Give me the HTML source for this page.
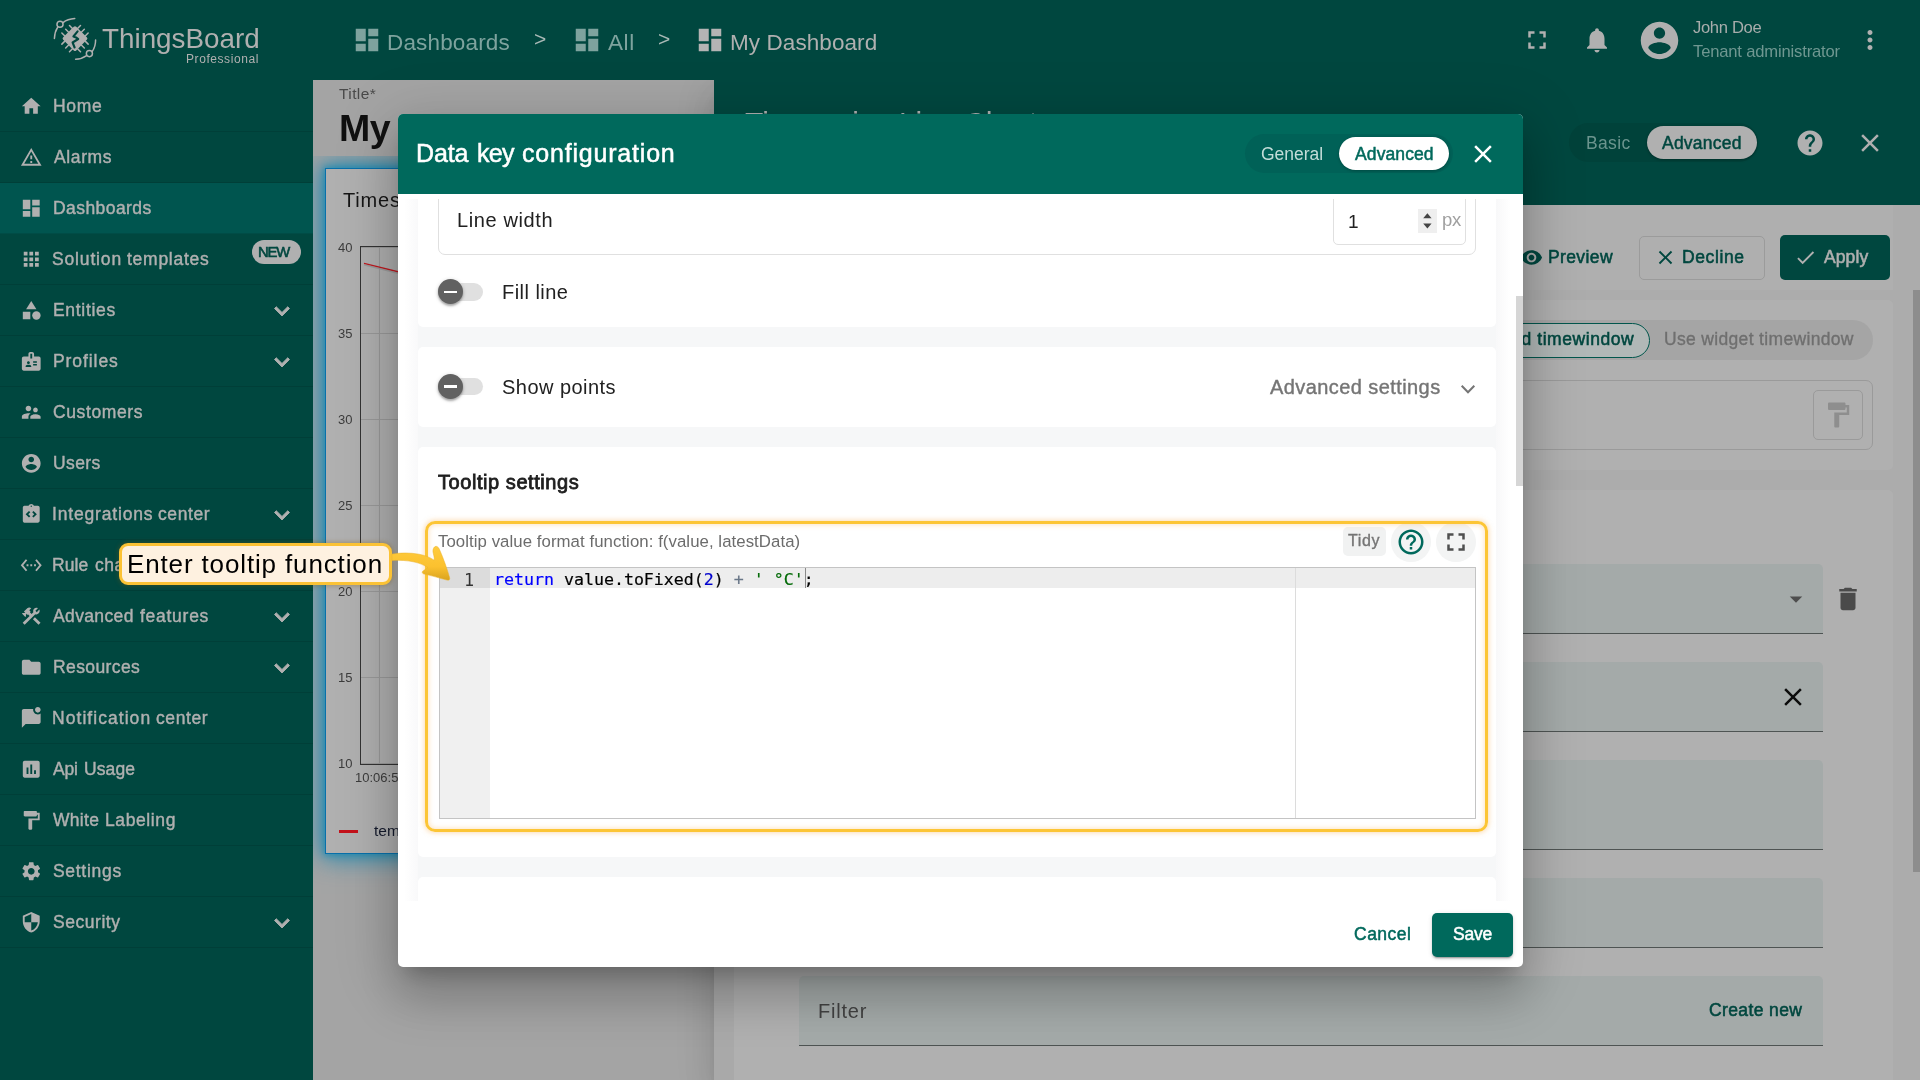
<!DOCTYPE html>
<html lang="en">
<head>
<meta charset="utf-8">
<title>ThingsBoard - Data key configuration</title>
<style>
*{box-sizing:border-box;margin:0;padding:0}
html,body{width:1920px;height:1080px;overflow:hidden}
body{will-change:opacity;font-family:"Liberation Sans",sans-serif;position:relative;background:#a4a4a4;color:#212121}
.abs{position:absolute}
svg.ic{position:absolute;display:block;fill:currentColor}
.t{position:absolute;white-space:nowrap;line-height:1;will-change:transform}
.m{-webkit-text-stroke:0.35px currentColor}

/* ---------- top toolbar ---------- */
#topbar{position:absolute;left:313px;top:0;width:1607px;height:80px;background:#00473f}
/* ---------- sidebar ---------- */
#side{position:absolute;left:0;top:0;width:313px;height:1080px;background:#00473f;z-index:3}
#side .row{position:absolute;left:0;width:313px;height:51px;border-bottom:1px solid rgba(0,0,0,.10)}
#side .row.act{background:#00554f}
#side .row .lbl{will-change:transform;position:absolute;left:52.5px;top:0;height:50px;line-height:50px;font-size:17.5px;color:#b0b0b0;white-space:nowrap;letter-spacing:.35px;-webkit-text-stroke:.42px #b0b0b0}
#side .row svg.mi{position:absolute;left:20px;top:14px;width:22.5px;height:22.5px;fill:#b0b0b0}
#side .row svg.ch{position:absolute;left:267px;top:10.5px;width:30px;height:30px;fill:#b0b0b0;stroke:#b0b0b0;stroke-width:.7px}

/* ---------- dashboard area ---------- */
#main{position:absolute;left:313px;top:80px;width:1607px;height:1000px;overflow:hidden}
#dash{position:absolute;left:0;top:0;width:401px;height:1000px;background:#a4a4a4;overflow:hidden}
/* ---------- right panel ---------- */
#panel{position:absolute;left:401px;top:0;width:1206px;height:1000px;background:#acacac;overflow:hidden;box-shadow:0 10px 12px -6px rgba(0,0,0,.12),0 20px 30px 2.5px rgba(0,0,0,.08),0 7.5px 37px 6px rgba(0,0,0,.07)}
#panel .hdr{position:absolute;left:0;top:0;width:1206px;height:125px;background:#00473f}
.card{position:absolute;background:#b0b0b0;border-radius:5px}
.fld{position:absolute;left:85px;width:1024px;background:#a4aaa9;border-bottom:1px solid #4e5453;border-radius:5px 5px 0 0}

/* ---------- dialog ---------- */
#dlg{position:absolute;left:398px;top:114px;width:1125px;height:853px;background:#fff;border-radius:5px;z-index:10;
 box-shadow:0 14px 19px -9px rgba(0,0,0,.22),0 30px 48px 4px rgba(0,0,0,.17),0 11px 58px 10px rgba(0,0,0,.13)}
#dlg .hdr{position:absolute;left:0;top:0;width:1125px;height:80px;background:#00695c;border-radius:5px 5px 0 0}
#scroll{position:absolute;left:0;top:85px;width:1125px;height:702px;overflow:hidden}
.wc{position:absolute;left:20px;width:1078px;background:#fff;border-radius:5px}
</style>
</head>
<body>

<svg width="0" height="0" style="position:absolute">
<defs>
<symbol id="i-home" viewBox="0 0 24 24"><path d="M10 20v-6h4v6h5v-8h3L12 3 2 12h3v8z"/></symbol>
<symbol id="i-warn" viewBox="0 0 24 24"><path d="M12 5.990L19.530 19H4.470L12 5.990M12 2L1 21h22L12 2zm1 14h-2v2h2v-2zm0-6h-2v4h2v-4z"/></symbol>
<symbol id="i-dash" viewBox="0 0 24 24"><path d="M3 13h8V3H3v10zm0 8h8v-6H3v6zm10 0h8V11h-8v10zm0-18v6h8V3h-8z"/></symbol>
<symbol id="i-apps" viewBox="0 0 24 24"><path d="M4 8h4V4H4v4zm6 12h4v-4h-4v4zm-6 0h4v-4H4v4zm0-6h4v-4H4v4zm6 0h4v-4h-4v4zm6-10v4h4V4h-4zm-6 4h4V4h-4v4zm6 6h4v-4h-4v4zm0 6h4v-4h-4v4z"/></symbol>
<symbol id="i-cat" viewBox="0 0 24 24"><path d="M12 2l-5.500 9h11z"/><circle cx="17.500" cy="17.500" r="4.500"/><path d="M3 13.500h8v8H3z"/></symbol>
<symbol id="i-badge" viewBox="0 0 24 24"><path d="M20 7h-5V4c0-1.100-.900-2-2-2h-2c-1.100 0-2 .900-2 2v3H4c-1.100 0-2 .900-2 2v11c0 1.100.900 2 2 2h16c1.100 0 2-.900 2-2V9c0-1.100-.900-2-2-2zM9 12c.830 0 1.500.670 1.500 1.500S9.830 15 9 15s-1.500-.670-1.500-1.500S8.170 12 9 12zm3 6H6v-.750c0-1 2-1.500 3-1.500s3 .500 3 1.500V18zm1-9h-2V4h2v5zm5 7.500h-4V15h4v1.500zm0-3h-4V12h4v1.500z"/></symbol>
<symbol id="i-sup" viewBox="0 0 24 24"><path d="M16.500 12c1.380 0 2.490-1.120 2.490-2.500S17.880 7 16.500 7C15.120 7 14 8.120 14 9.500s1.120 2.500 2.500 2.500zM9 11c1.660 0 2.990-1.340 2.990-3S10.660 5 9 5C7.340 5 6 6.340 6 8s1.340 3 3 3zm7.500 3c-1.830 0-5.500.920-5.500 2.750V19h11v-2.250c0-1.830-3.670-2.750-5.500-2.750zM9 13c-2.330 0-7 1.170-7 3.500V19h7v-2.250c0-.850.330-2.340 2.370-3.470C10.500 13.100 9.660 13 9 13z"/></symbol>
<symbol id="i-acc" viewBox="0 0 24 24"><path d="M12 2C6.480 2 2 6.480 2 12s4.480 10 10 10 10-4.480 10-10S17.520 2 12 2zm0 3c1.660 0 3 1.340 3 3s-1.340 3-3 3-3-1.340-3-3 1.340-3 3-3zm0 14.200c-2.500 0-4.710-1.280-6-3.220.030-1.990 4-3.080 6-3.080 1.990 0 5.970 1.090 6 3.080-1.290 1.940-3.500 3.220-6 3.220z"/></symbol>
<symbol id="i-integ" viewBox="0 0 24 24"><path d="M19 3h-4.180C14.400 1.840 13.300 1 12 1s-2.400.840-2.820 2H5c-.140 0-.270.010-.400.040-.390.080-.740.280-1.010.550-.180.180-.330.400-.430.640-.100.230-.160.490-.160.770v14c0 .270.060.540.160.780s.250.450.430.640c.270.270.620.470 1.010.550.130.020.260.030.400.030h14c1.100 0 2-.900 2-2V5c0-1.100-.900-2-2-2zm-8 11.170l-1.410 1.420L6 12l3.590-3.590L11 9.830 8.830 12 11 14.170zm1-9.920c-.410 0-.750-.340-.750-.750s.340-.750.750-.750.750.340.750.750-.340.750-.750.750zm2.410 11.340L13 14.170 15.170 12 13 9.830l1.410-1.420L18 12l-3.590 3.590z"/></symbol>
<symbol id="i-eth" viewBox="0 0 24 24"><path d="M7.770 6.760L6.230 5.480.820 12l5.410 6.520 1.540-1.280L3.420 12l4.350-5.240zM7 13h2v-2H7v2zm10-2h-2v2h2v-2zm-6 2h2v-2h-2v2zm6.770-7.520l-1.540 1.280L20.580 12l-4.350 5.240 1.540 1.280L23.180 12l-5.410-6.520z"/></symbol>
<symbol id="i-cons" viewBox="0 0 24 24"><path d="M13.783 15.172l2.121-2.121 5.996 5.996-2.121 2.121zM17.500 10c1.930 0 3.500-1.570 3.500-3.500 0-.580-.160-1.120-.410-1.600l-2.700 2.700-1.490-1.490 2.700-2.700c-.480-.250-1.020-.410-1.600-.410C15.570 3 14 4.570 14 6.500c0 .410.080.800.210 1.160l-1.850 1.850-1.780-1.780.710-.710-1.410-1.410L12 3.490c-1.170-1.170-3.070-1.170-4.240 0L4.220 7.030l1.410 1.410H2.810l-.710.710 3.540 3.540.710-.710V9.150l1.410 1.410.710-.710 1.780 1.780-7.410 7.410 2.120 2.120L16.340 9.790c.360.130.750.210 1.160.210z"/></symbol>
<symbol id="i-folder" viewBox="0 0 24 24"><path d="M10 4H4c-1.100 0-1.990.900-1.990 2L2 18c0 1.100.900 2 2 2h16c1.100 0 2-.900 2-2V8c0-1.100-.900-2-2-2h-8l-2-2z"/></symbol>
<symbol id="i-chat" viewBox="0 0 24 24"><path d="M22 6.980V16c0 1.100-.900 2-2 2H6l-4 4V4c0-1.100.900-2 2-2h10.100c-.060.320-.100.660-.100 1 0 2.760 2.240 5 5 5 1.130 0 2.160-.390 3-1.020zM16 3c0 1.660 1.340 3 3 3s3-1.340 3-3-1.340-3-3-3-3 1.340-3 3z"/></symbol>
<symbol id="i-chart" viewBox="0 0 24 24"><path d="M19 3H5c-1.100 0-2 .900-2 2v14c0 1.100.900 2 2 2h14c1.100 0 2-.900 2-2V5c0-1.100-.900-2-2-2zM9 17H7v-7h2v7zm4 0h-2V7h2v10zm4 0h-2v-4h2v4z"/></symbol>
<symbol id="i-paint" viewBox="0 0 24 24"><path d="M18 4V3c0-.550-.450-1-1-1H5c-.550 0-1 .450-1 1v4c0 .550.450 1 1 1h12c.550 0 1-.450 1-1V6h1v4H9v11c0 .550.450 1 1 1h2c.550 0 1-.450 1-1v-9h8V4h-3z"/></symbol>
<symbol id="i-set" viewBox="0 0 24 24"><path d="M19.140 12.940c.040-.300.060-.610.060-.940 0-.320-.020-.640-.070-.940l2.030-1.580c.180-.140.230-.410.120-.610l-1.920-3.320c-.120-.220-.370-.290-.590-.220l-2.390.960c-.500-.380-1.030-.700-1.620-.940l-.360-2.540c-.040-.240-.240-.410-.480-.410h-3.840c-.240 0-.430.170-.470.410l-.360 2.540c-.590.240-1.130.570-1.620.940l-2.390-.960c-.220-.080-.470 0-.590.220L2.740 8.870c-.120.210-.080.470.120.610l2.030 1.580c-.050.300-.090.630-.090.940s.020.640.070.940l-2.030 1.580c-.180.140-.230.410-.120.610l1.920 3.320c.120.220.370.290.590.220l2.390-.960c.500.380 1.030.700 1.620.940l.360 2.540c.050.240.240.410.480.410h3.840c.240 0 .440-.170.470-.410l.360-2.540c.590-.240 1.130-.560 1.620-.940l2.390.960c.220.080.470 0 .590-.220l1.920-3.320c.120-.220.070-.470-.120-.610l-2.010-1.580zM12 15.600c-1.980 0-3.600-1.620-3.600-3.600s1.620-3.600 3.600-3.600 3.600 1.620 3.600 3.600-1.620 3.600-3.600 3.600z"/></symbol>
<symbol id="i-sec" viewBox="0 0 24 24"><path d="M12 1L3 5v6c0 5.550 3.840 10.740 9 12 5.160-1.260 9-6.450 9-12V5l-9-4zm0 10.990h7c-.530 4.120-3.280 7.790-7 8.940V12H5V6.300l7-3.110v8.800z"/></symbol>
<symbol id="i-more" viewBox="0 0 24 24"><path d="M16.590 8.590L12 13.170 7.410 8.590 6 10l6 6 6-6z"/></symbol>
<symbol id="i-full" viewBox="0 0 24 24"><path d="M7 14H5v5h5v-2H7v-3zm-2-4h2V7h3V5H5v5zm12 7h-3v2h5v-5h-2v3zM14 5v2h3v3h2V5h-5z"/></symbol>
<symbol id="i-bell" viewBox="0 0 24 24"><path d="M12 22c1.100 0 2-.900 2-2h-4c0 1.100.890 2 2 2zm6-6v-5c0-3.070-1.640-5.640-4.500-6.320V4c0-.830-.670-1.500-1.500-1.500s-1.500.670-1.500 1.500v.680C7.630 5.360 6 7.920 6 11v5l-2 2v1h16v-1l-2-2z"/></symbol>
<symbol id="i-vert" viewBox="0 0 24 24"><path d="M12 8c1.100 0 2-.900 2-2s-.900-2-2-2-2 .900-2 2 .900 2 2 2zm0 2c-1.100 0-2 .900-2 2s.900 2 2 2 2-.900 2-2-.900-2-2-2zm0 6c-1.100 0-2 .900-2 2s.900 2 2 2 2-.900 2-2-.900-2-2-2z"/></symbol>
<symbol id="i-close" viewBox="0 0 24 24"><path d="M19 6.410L17.590 5 12 10.590 6.410 5 5 6.410 10.590 12 5 17.590 6.410 19 12 13.410 17.590 19 19 17.590 13.410 12z"/></symbol>
<symbol id="i-help" viewBox="0 0 24 24"><path d="M12 2C6.480 2 2 6.480 2 12s4.480 10 10 10 10-4.480 10-10S17.520 2 12 2zm1 17h-2v-2h2v2zm2.070-7.750l-.900.920C13.450 12.900 13 13.500 13 15h-2v-.500c0-1.100.450-2.100 1.170-2.830l1.240-1.260c.370-.360.590-.860.590-1.410 0-1.100-.900-2-2-2s-2 .900-2 2H8c0-2.210 1.790-4 4-4s4 1.790 4 4c0 .880-.360 1.680-.930 2.250z"/></symbol>
<symbol id="i-helpo" viewBox="0 0 24 24"><path d="M11 18h2v-2h-2v2zm1-16C6.480 2 2 6.480 2 12s4.480 10 10 10 10-4.480 10-10S17.520 2 12 2zm0 18c-4.410 0-8-3.590-8-8s3.590-8 8-8 8 3.590 8 8-3.590 8-8 8zm0-14c-2.210 0-4 1.790-4 4h2c0-1.100.900-2 2-2s2 .900 2 2c0 2-3 1.750-3 5h2c0-2.250 3-2.500 3-5 0-2.210-1.790-4-4-4z"/></symbol>
<symbol id="i-eye" viewBox="0 0 24 24"><path d="M12 4.500C7 4.500 2.730 7.610 1 12c1.730 4.390 6 7.500 11 7.500s9.270-3.110 11-7.500c-1.730-4.390-6-7.500-11-7.500zM12 17c-2.760 0-5-2.240-5-5s2.240-5 5-5 5 2.240 5 5-2.240 5-5 5zm0-8c-1.660 0-3 1.340-3 3s1.340 3 3 3 3-1.340 3-3-1.340-3-3-3z"/></symbol>
<symbol id="i-check" viewBox="0 0 24 24"><path d="M9 16.170L4.830 12l-1.420 1.410L9 19 21 7l-1.410-1.410z"/></symbol>
<symbol id="i-del" viewBox="0 0 24 24"><path d="M6 19c0 1.100.900 2 2 2h8c1.100 0 2-.900 2-2V7H6v12zM19 4h-3.500l-1-1h-5l-1 1H5v2h14V4z"/></symbol>
<symbol id="i-drop" viewBox="0 0 24 24"><path d="M7 10l5 5 5-5z"/></symbol>
</defs>
</svg>

<div id="topbar">
  <!-- breadcrumb (coords relative to topbar: x-313) -->
  <svg class="ic" style="left:39px;top:25px;width:30px;height:30px;color:#7ea39e"><use href="#i-dash"/></svg>
  <span class="t" id="bc1" style="left:73.9px;top:31.5px;font-size:22.5px;color:#7ea39e;letter-spacing:0.16px">Dashboards</span>
  <span class="t" id="gt1" style="left:221.4px;top:27.5px;font-size:21px;color:#a9b9b6">&gt;</span>
  <svg class="ic" style="left:258.5px;top:25px;width:30px;height:30px;color:#7ea39e"><use href="#i-dash"/></svg>
  <span class="t" id="bc2" style="left:295px;top:31.5px;font-size:22.5px;color:#7ea39e;letter-spacing:0.60px">All</span>
  <span class="t" id="gt2" style="left:345.3px;top:27.5px;font-size:21px;color:#a9b9b6">&gt;</span>
  <svg class="ic" style="left:382.3px;top:25px;width:30px;height:30px;color:#b4b4b4"><use href="#i-dash"/></svg>
  <span class="t" id="bc3" style="left:417px;top:31.5px;font-size:22.5px;color:#b0b0b0;letter-spacing:.08px">My Dashboard</span>
  <!-- right icons -->
  <svg class="ic" style="left:1209.4px;top:25px;width:30px;height:30px;color:#b0b0b0"><use href="#i-full"/></svg>
  <svg class="ic" style="left:1269px;top:25px;width:30px;height:30px;color:#b0b0b0"><use href="#i-bell"/></svg>
  <svg class="ic" style="left:1324.2px;top:17.9px;width:45px;height:45px;color:#b0b0b0"><use href="#i-acc"/></svg>
  <span class="t" id="un" style="left:1379.5px;top:19.5px;font-size:16.6px;color:#a8adac;letter-spacing:-0.34px">John Doe</span>
  <span class="t" id="ua" style="left:1379.5px;top:43.5px;font-size:16.6px;color:#6f9791;letter-spacing:-0.17px">Tenant administrator</span>
  <svg class="ic" style="left:1541.7px;top:25px;width:30px;height:30px;color:#b0b0b0"><use href="#i-vert"/></svg>
</div>

<div id="side">
  <!-- logo -->
  <svg class="abs" style="left:52px;top:16px;width:46px;height:46px" viewBox="0 0 46 46" fill="none" stroke="#b0b0b0" stroke-width="1.5" stroke-linecap="round">
    <circle cx="8" cy="8.25" r="3.05"/>
    <path d="M5.6 11.3 C3.6 14.4 2.5 18.4 2.4 22.6"/>
    <path d="M11 6.600 C14 4.3 18.3 2.9 22.75 2.6"/>
    <circle cx="37.4" cy="37.6" r="3.05"/>
    <path d="M40.3 35.3 C42.3 32.3 43.600 28 43.600 23.9"/>
    <path d="M34.600 39.6 C31.5 41.8 27.5 43.1 23.600 43.25"/>
    <g transform="translate(23 22.6) rotate(45)">
      <rect x="-9.25" y="-9.25" width="18.500" height="18.500" rx="1.8" fill="#b0b0b0" stroke="none"/>
      <g stroke-width="1.5" stroke-linecap="round">
      <path d="M-5.400 -9v-4.200M0 -9v-4.200M5.400 -9v-4.200M-5.400 9v4.200M0 9v4.200M5.400 9v4.200M-9 -5.400h-4.200M-9 0h-4.200M-9 5.400h-4.200M9 -5.400h4.200M9 0h4.200M9 5.400h4.200"/>
      </g>
    </g>
    <path d="M25.600 15.3 L21.400 20.5 C23.500 21 25 21.800 26.200 23 L20.600 26.500 L22.600 31.500" stroke="#00473f" stroke-width="2.1" stroke-linejoin="round"/>
  </svg>
  <span class="t" id="lg1" style="left:101.5px;top:24.6px;font-size:27.8px;color:#b0b0b0;letter-spacing:0.01px">ThingsBoard</span>
  <span class="t" id="lg2" style="left:186.0px;top:53.2px;font-size:12px;color:#b0b0b0;letter-spacing:0.57px">Professional</span>
<div class="row" style="top:81px"><svg class="mi"><use href="#i-home"/></svg><span class="lbl" id="sl0" style="letter-spacing:.7px">Home</span></div>
<div class="row" style="top:132px"><svg class="mi"><use href="#i-warn"/></svg><span class="lbl" id="sl1" style="letter-spacing:0.62px;left:53.5px">Alarms</span></div>
<div class="row act" style="top:183px"><svg class="mi"><use href="#i-dash"/></svg><span class="lbl" id="sl2" style="letter-spacing:0.43px">Dashboards</span></div>
<div class="row" style="top:234px"><svg class="mi"><use href="#i-apps"/></svg><span class="lbl" id="sl3w0" style="left:52.2px;letter-spacing:0.84px">Solution</span><span class="lbl" id="sl3w1" style="left:127.3px;letter-spacing:0.74px">templates</span><div class="abs" style="left:252px;top:5.5px;width:48.5px;height:24.5px;border-radius:13px;background:#b0b0b0"></div><span class="t" id="new" style="left:257.9px;top:10.8px;color:#00473f;font-size:14.8px;letter-spacing:-1.15px;-webkit-text-stroke:.6px #00473f">NEW</span></div>
<div class="row" style="top:285px"><svg class="mi"><use href="#i-cat"/></svg><span class="lbl" id="sl4" style="letter-spacing:.7px">Entities</span><svg class="ch"><use href="#i-more"/></svg></div>
<div class="row" style="top:336px"><svg class="mi"><use href="#i-badge"/></svg><span class="lbl" id="sl5" style="letter-spacing:0.92px">Profiles</span><svg class="ch"><use href="#i-more"/></svg></div>
<div class="row" style="top:387px"><svg class="mi"><use href="#i-sup"/></svg><span class="lbl" id="sl6" style="letter-spacing:0.61px">Customers</span></div>
<div class="row" style="top:438px"><svg class="mi"><use href="#i-acc"/></svg><span class="lbl" id="sl7" style="letter-spacing:0.38px">Users</span></div>
<div class="row" style="top:489px"><svg class="mi"><use href="#i-integ"/></svg><span class="lbl" id="sl8w0" style="left:52.2px;letter-spacing:0.83px">Integrations</span><span class="lbl" id="sl8w1" style="left:157.9px;letter-spacing:.6px">center</span><svg class="ch"><use href="#i-more"/></svg></div>
<div class="row" style="top:540px"><svg class="mi"><use href="#i-eth"/></svg><span class="lbl" id="sl9w0" style="left:51.9px;letter-spacing:0.07px">Rule</span><span class="lbl" id="sl9w1" style="left:94.6px;letter-spacing:0.48px">chains</span></div>
<div class="row" style="top:591px"><svg class="mi"><use href="#i-cons"/></svg><span class="lbl" id="sl10w0" style="left:53.1px;letter-spacing:0.37px">Advanced</span><span class="lbl" id="sl10w1" style="left:139.9px;letter-spacing:0.73px">features</span><svg class="ch"><use href="#i-more"/></svg></div>
<div class="row" style="top:642px"><svg class="mi"><use href="#i-folder"/></svg><span class="lbl" id="sl11" style="letter-spacing:0.39px">Resources</span><svg class="ch"><use href="#i-more"/></svg></div>
<div class="row" style="top:693px"><svg class="mi"><use href="#i-chat"/></svg><span class="lbl" id="sl12w0" style="left:52.4px;letter-spacing:1.05px">Notification</span><span class="lbl" id="sl12w1" style="left:156.0px;letter-spacing:.6px">center</span></div>
<div class="row" style="top:744px"><svg class="mi"><use href="#i-chart"/></svg><span class="lbl" id="sl13w0" style="left:53.3px;letter-spacing:-0.20px">Api</span><span class="lbl" id="sl13w1" style="left:84.2px;letter-spacing:0.10px">Usage</span></div>
<div class="row" style="top:795px"><svg class="mi"><use href="#i-paint"/></svg><span class="lbl" id="sl14w0" style="left:53.3px;letter-spacing:0.30px">White</span><span class="lbl" id="sl14w1" style="left:104.9px;letter-spacing:.6px">Labeling</span></div>
<div class="row" style="top:846px"><svg class="mi"><use href="#i-set"/></svg><span class="lbl" id="sl15" style="letter-spacing:.7px">Settings</span></div>
<div class="row" style="top:897px"><svg class="mi"><use href="#i-sec"/></svg><span class="lbl" id="sl16" style="letter-spacing:0.54px">Security</span><svg class="ch"><use href="#i-more"/></svg></div>
</div>

<div id="main">
<div id="dash">
  <span class="t" style="left:25.5px;top:6px;font-size:15.5px;color:#4a4a4a;letter-spacing:.4px">Title*</span>
  <span class="t" id="dt" style="left:26px;top:30px;font-size:37.5px;font-weight:700;color:#101010;letter-spacing:-.6px">My Dashboard</span>
  <!-- widget -->
  <div class="abs" style="left:0;top:75.5px;width:401px;height:925px;overflow:hidden"><div class="abs" style="left:12px;top:12.5px;width:520px;height:686px;background:#b0b0b0;border:1px solid #0870aa;box-shadow:0 0 24px 4px #2389b0, 0 0 7px 1px #2a8eb2"></div></div>
  <span class="t" style="left:30px;top:109.5px;font-size:20px;color:#161616;letter-spacing:.8px">Timeseries Line Chart</span>
  <div class="abs" style="left:48px;top:167px;width:360px;height:1px;background:#9a9a9a"></div><span class="t" style="left:24.5px;top:160.5px;font-size:13px;color:#3c3c3c">40</span><div class="abs" style="left:48px;top:253px;width:360px;height:1px;background:#9a9a9a"></div><span class="t" style="left:24.5px;top:246.5px;font-size:13px;color:#3c3c3c">35</span><div class="abs" style="left:48px;top:339px;width:360px;height:1px;background:#9a9a9a"></div><span class="t" style="left:24.5px;top:332.5px;font-size:13px;color:#3c3c3c">30</span><div class="abs" style="left:48px;top:425px;width:360px;height:1px;background:#9a9a9a"></div><span class="t" style="left:24.5px;top:418.5px;font-size:13px;color:#3c3c3c">25</span><div class="abs" style="left:48px;top:511px;width:360px;height:1px;background:#9a9a9a"></div><span class="t" style="left:24.5px;top:504.5px;font-size:13px;color:#3c3c3c">20</span><div class="abs" style="left:48px;top:597px;width:360px;height:1px;background:#9a9a9a"></div><span class="t" style="left:24.5px;top:590.5px;font-size:13px;color:#3c3c3c">15</span><div class="abs" style="left:48px;top:683px;width:360px;height:1px;background:#9a9a9a"></div><span class="t" style="left:24.5px;top:676.5px;font-size:13px;color:#3c3c3c">10</span>
  <div class="abs" style="left:66px;top:167px;width:1px;height:517px;background:#999"></div>
  <div class="abs" style="left:47px;top:166px;width:380px;height:518.5px;border:1px solid #333;border-width:1px 0 1px 1px"></div>
  <svg class="abs" style="left:48px;top:170px;width:80px;height:40px" viewBox="0 0 80 40"><path d="M3 13.300L40 22.500L80 30" stroke="#c0181f" stroke-width="1.3" fill="none"/><path d="M3 14.800L40 24L80 31.500" stroke="#8f8f8f" stroke-width="1.6" fill="none" opacity=".6"/></svg>
  <span class="t" style="left:42px;top:691px;font-size:13px;color:#3c3c3c">10:06:50</span>
  <div class="abs" style="left:26px;top:750px;width:19px;height:3px;background:#c4121b"></div>
  <span class="t" style="left:61px;top:743px;font-size:15.5px;color:#141a2c">temperature</span>
</div>

<div id="panel">
  <div class="abs" style="left:0;top:0;width:20px;height:1000px;background:#a9a9a9"></div>
  <div class="card" style="left:20px;top:125px;width:1159px;height:85px;border-radius:0;background:#afafaf"></div>
  <div class="hdr">
    <span class="t" id="pt" style="left:31px;top:27.5px;font-size:30px;color:#b0b0b0">Timeseries Line Chart</span>
    <div class="abs" style="left:855px;top:43px;width:189px;height:39px;border-radius:20px;background:#00423a"></div>
    <span class="t m" id="pb" style="left:872.0px;top:54.5px;font-size:17.5px;color:#6b948e;-webkit-text-stroke:0;letter-spacing:0.35px">Basic</span>
    <div class="abs" style="left:932.500px;top:46px;width:110.500px;height:33px;border-radius:17px;background:#b0b0b0;box-shadow:0 1px 3px rgba(0,0,0,.3)"></div>
    <span class="t m" id="pa" style="left:948px;top:54.5px;font-size:17.5px;color:#00473f;letter-spacing:0.22px;-webkit-text-stroke:.5px #00473f">Advanced</span>
    <svg class="ic" style="left:1081px;top:48.300px;width:30px;height:30px;color:#b0b0b0"><use href="#i-help"/></svg>
    <svg class="ic" style="left:1141px;top:48px;width:30px;height:30px;color:#b0b0b0"><use href="#i-close"/></svg>
  </div>
  <!-- action buttons -->
  <svg class="ic" style="left:806px;top:165.500px;width:23px;height:23px;color:#00473f"><use href="#i-eye"/></svg>
  <span class="t" id="bp" style="left:834.3px;top:168.5px;font-size:17.5px;color:#00473f;-webkit-text-stroke:.55px currentColor;letter-spacing:0.38px">Preview</span>
  <div class="abs" style="left:925px;top:155.500px;width:125.500px;height:44.500px;border:1px solid #9b9b9b;border-radius:5px"></div>
  <svg class="ic" style="left:940px;top:166px;width:23px;height:23px;color:#00473f"><use href="#i-close"/></svg>
  <span class="t" id="bd" style="left:968.3px;top:168.500px;font-size:17.500px;color:#00473f;-webkit-text-stroke:.55px currentColor;letter-spacing:0.62px">Decline</span>
  <div class="abs" style="left:1066px;top:155px;width:110px;height:44.500px;background:#00473f;border-radius:5px"></div>
  <svg class="ic" style="left:1080px;top:166px;width:23px;height:23px;color:#b0b0b0"><use href="#i-check"/></svg>
  <span class="t" id="ba" style="left:1110.2px;top:168.500px;font-size:17.500px;color:#b0b0b0;-webkit-text-stroke:.55px currentColor;letter-spacing:.1px">Apply</span>

  <!-- card 1 -->
  <div class="card" style="left:20px;top:220px;width:1159px;height:170px"></div>
  <div class="abs" style="left:40px;top:240px;width:1119px;height:40px;border-radius:20px;background:#a5a5a5"></div>
  <div class="abs" style="left:640px;top:243px;width:296px;height:35px;border-radius:18px;background:#b1b8b7;border:1px solid #00564c"></div>
  <span class="t" id="tw1" style="left:692.1px;top:251px;font-size:17.5px;color:#00473f;letter-spacing:.55px;-webkit-text-stroke:.55px #00473f">Use dashboard timewindow</span>
  <span class="t m" id="tw2" style="left:950.0px;top:251px;font-size:17.500px;color:#6f6f6f;letter-spacing:0.33px">Use widget timewindow</span>
  <div class="abs" style="left:40px;top:300px;width:1119px;height:70px;border:1px solid #9a9a9a;border-radius:7px"></div>
  <div class="abs" style="left:1099px;top:310px;width:50px;height:50px;border:1px solid #9a9a9a;border-radius:5px"></div>
  <svg class="ic" style="left:1109px;top:320px;width:30px;height:30px;color:#8e8e8e"><use href="#i-paint"/></svg>

  <!-- card 2 -->
  <div class="card" style="left:20px;top:410px;width:1159px;height:620px"></div>
  <div class="fld" style="top:484px;height:70px"></div>
  <svg class="ic" style="left:1066.500px;top:504px;width:30px;height:30px;color:#4e4e4e"><use href="#i-drop"/></svg>
  <svg class="ic" style="left:1118.800px;top:504px;width:30px;height:30px;color:#4a4a4a"><use href="#i-del"/></svg>
  <div class="fld" style="top:582px;height:70px"></div>
  <svg class="ic" style="left:1063.700px;top:602px;width:30px;height:30px;color:#0c0c0c"><use href="#i-close"/></svg>
  <div class="fld" style="top:680px;height:90px"></div>
  <div class="fld" style="top:798px;height:70px"></div>
  <div class="fld" style="top:896px;height:70px"></div>
  <span class="t" id="fl" style="left:103.8px;top:921px;font-size:20px;color:#424242;letter-spacing:0.80px">Filter</span>
  <span class="t" id="cn" style="left:995px;top:922px;font-size:17.5px;color:#00473f;-webkit-text-stroke:.55px currentColor;letter-spacing:0.39px">Create new</span>
  <!-- scrollbar -->
  <div class="abs" style="left:1199px;top:210px;width:7px;height:582px;background:#8d8d8d"></div>
</div>

</div><!-- /main -->
<div id="dlg">
  <div class="hdr">
    <span class="t m" id="dt0" style="left:18.4px;letter-spacing:-0.15px;top:27.2px;font-size:25px;color:#fff;-webkit-text-stroke:.5px #fff">Data</span><span class="t m" id="dt1" style="left:79.1px;letter-spacing:-0.75px;top:27.2px;font-size:25px;color:#fff;-webkit-text-stroke:.5px #fff">key</span><span class="t m" id="dt2" style="left:124.4px;letter-spacing:0.80px;top:27.2px;font-size:25px;color:#fff;-webkit-text-stroke:.5px #fff">configuration</span>
    <div class="abs" style="left:847px;top:20px;width:208px;height:39px;border-radius:20px;background:#006157"></div>
    <span class="t" id="dg" style="left:863.0px;top:31.5px;font-size:17.5px;color:#c3ddd9;letter-spacing:-0.01px">General</span>
    <div class="abs" style="left:941px;top:23px;width:110px;height:33px;border-radius:17px;background:#fff;box-shadow:0 1px 3px rgba(0,0,0,.25)"></div>
    <span class="t m" id="da" style="left:957.2px;top:31.5px;font-size:17.5px;color:#00695c;letter-spacing:0.11px;-webkit-text-stroke:.5px #00695c">Advanced</span>
    <svg class="ic" style="left:1069.500px;top:25px;width:30px;height:30px;color:#fff"><use href="#i-close"/></svg>
  </div>
  <div id="scroll">
    <div class="abs" style="left:20px;top:0;width:1078px;height:702px;background:#f6f7f8"></div>
    <div class="abs" style="left:1098px;top:0;width:14px;height:702px;background:linear-gradient(90deg,#f8f8f9,#fff)"></div>
    <div class="abs" style="left:6px;top:0;width:14px;height:702px;background:linear-gradient(90deg,#fff,#f9f9fa)"></div>
    <!-- card 1 -->
    <div class="wc" style="top:-20px;height:148px"></div>
    <div class="abs" style="left:40px;top:-15px;width:1037.500px;height:70.500px;border:1px solid #e0e0e0;border-radius:7px"></div>
    <span class="t" id="lw" style="left:58.9px;top:11px;font-size:20px;color:#212121;letter-spacing:0.61px">Line width</span>
    <div class="abs" style="left:935px;top:-5px;width:133px;height:50.500px;border:1px solid #e0e0e0;border-radius:5px"></div>
    <span class="t" style="left:949.5px;top:12.5px;font-size:19px;color:#212121">1</span>
    <div class="abs" style="left:1020px;top:10px;width:18.700px;height:23.500px;background:#efefef"></div>
    <svg class="abs" style="left:1020px;top:10px;width:18.700px;height:23.500px" viewBox="0 0 18.700 23.500"><path d="M5.200 9.200L9.400 4.200L13.600 9.200zM5.200 14.500L9.400 19.500L13.600 14.500z" fill="#454545"/></svg>
    <span class="t" style="left:1044px;top:12px;font-size:18.5px;color:#a0a0a0;letter-spacing:-.3px">px</span>
    <div class="abs" style="left:40px;top:84.05000000000001px;width:45px;height:17.5px;border-radius:9px;background:#e0e0e0"></div>
    <div class="abs" style="left:40.0px;top:80.30000000000001px;width:25px;height:25px;border-radius:50%;background:#616161;box-shadow:0 2px 2px rgba(0,0,0,.24),0 1px 4px rgba(0,0,0,.2)"></div>
    <div class="abs" style="left:46.0px;top:91.55000000000001px;width:13px;height:2.5px;background:#fff"></div>
    <span class="t" id="fill" style="left:104.3px;top:82.500px;font-size:20px;color:#212121;letter-spacing:0.46px">Fill line</span>
    <!-- card 2 -->
    <div class="wc" style="top:148px;height:80px"></div>
    <div class="abs" style="left:40px;top:178.95px;width:45px;height:17.5px;border-radius:9px;background:#e0e0e0"></div>
    <div class="abs" style="left:40.0px;top:175.2px;width:25px;height:25px;border-radius:50%;background:#616161;box-shadow:0 2px 2px rgba(0,0,0,.24),0 1px 4px rgba(0,0,0,.2)"></div>
    <div class="abs" style="left:46.0px;top:186.45px;width:13px;height:2.5px;background:#fff"></div>
    <span class="t" id="sp" style="left:104.3px;top:177.5px;font-size:20px;color:#212121;letter-spacing:0.46px">Show points</span>
    <span class="t m" id="as" style="left:872px;top:177.500px;font-size:20px;color:#757575;letter-spacing:.42px;-webkit-text-stroke:.4px #757575">Advanced settings</span>
    <svg class="abs" style="left:1062px;top:184.500px;width:16px;height:11px" viewBox="0 0 16 11"><path d="M1.700 1.700L8 8.300L14.300 1.700" stroke="#757575" stroke-width="2" fill="none"/></svg>
    <!-- card 3 -->
    <div class="wc" style="top:248px;height:410px"></div>
    <span class="t" id="ts" style="left:40.2px;top:273px;font-size:20px;-webkit-text-stroke:.8px #1c1c1c;color:#212121;letter-spacing:0.56px">Tooltip settings</span>
    <span class="t" id="tl" style="left:40px;top:335px;font-size:16.8px;color:#6c6c6c;letter-spacing:0.06px">Tooltip value format function: f(value, latestData)</span>
    <!-- tidy / help / fullscreen -->
    <div class="abs" style="left:945px;top:327.500px;width:43px;height:29.500px;border-radius:5px;background:#f1f2f2"></div>
    <span class="t m" id="tidy" style="left:949.8px;top:334px;font-size:16px;color:#757575;letter-spacing:0.63px">Tidy</span>
    <div class="abs" style="left:993px;top:323px;width:39.500px;height:39.500px;border-radius:50%;background:#f3f4f4"></div>
    <svg class="ic" style="left:997.700px;top:327.700px;width:30px;height:30px;color:#00695c"><use href="#i-helpo"/></svg>
    <div class="abs" style="left:1038px;top:323px;width:39.500px;height:39.500px;border-radius:50%;background:#f3f4f4"></div>
    <svg class="ic" style="left:1042.700px;top:327.700px;width:30px;height:30px;color:#4f4f4f"><use href="#i-full"/></svg>
    <!-- ace editor -->
    <div class="abs" id="ace" style="left:40.5px;top:368px;width:1037.5px;height:252px;border:1px solid #c4c4c4;background:#fff;overflow:hidden;font-family:'DejaVu Sans Mono',monospace;font-size:16.600px">
      <div class="abs" style="left:0;top:0;width:50px;height:250px;background:#f0f0f0"></div>
      <div class="abs" style="left:0;top:0;width:50px;height:20px;background:#dcdcdc"></div>
      <div class="abs" style="left:50px;top:0;width:987px;height:20px;background:#ededed"></div>
      <div class="abs" style="left:855.500px;top:0;width:1px;height:250px;background:#dcdcdc"></div>
      <span class="t" style="left:24.5px;top:1.7px;line-height:20px;color:#333;font-size:16.8px">1</span>
      <span class="t" id="code" style="left:54.8px;top:1.7px;line-height:20px;-webkit-text-stroke:.2px;color:#000;white-space:pre"><span style="color:#0000ff">return</span> value.toFixed(<span style="color:#0000cd">2</span>) <span style="color:#687687">+</span> <span style="color:#036a07">' &deg;C'</span>;</span>
      <div class="abs" style="left:365.500px;top:0;width:1px;height:20px;background:#8a8a8a"></div>
    </div>
    <!-- card 4 -->
    <div class="wc" style="top:678px;height:120px"></div>
  </div>
  <!-- dialog scrollbar -->
  <div class="abs" style="left:1118px;top:182px;width:7px;height:190px;background:#d6d6d6"></div>
  <!-- footer -->
  <span class="t m" id="cancel" style="left:956px;top:812px;font-size:17.500px;color:#00695c;letter-spacing:0.50px;-webkit-text-stroke:.5px #00695c">Cancel</span>
  <div class="abs" style="left:1034px;top:798.500px;width:81px;height:44.500px;border-radius:5px;background:#00695c;box-shadow:0 3px 1px -2px rgba(0,0,0,.2),0 2px 2px rgba(0,0,0,.14),0 1px 5px rgba(0,0,0,.12)"></div>
  <span class="t m" id="save" style="left:1054.5px;top:812px;font-size:17.5px;color:#fff;letter-spacing:-.2px;-webkit-text-stroke:.5px #fff">Save</span>
</div>

<!-- highlight box around editor -->
<div class="abs" style="left:425px;top:521px;width:1063px;height:311px;border:3px solid #fcc535;border-radius:10px;z-index:20;box-shadow:0 0 5px 1px rgba(250,190,110,.5), inset 0 0 5px 1px rgba(250,190,110,.4)"></div>
<!-- callout -->
<div class="abs" id="callout" style="left:119px;top:543.3px;width:273px;height:41.5px;border:3px solid #fbc235;border-radius:9px;background:#fef1e0;z-index:21;box-shadow:0 0 4px 1px rgba(120,90,20,.35)"></div>
<span class="t" id="ctext" style="left:126.7px;top:551px;font-size:26px;letter-spacing:0.86px;color:#000;z-index:22">Enter tooltip function</span>
<svg class="abs" style="left:385px;top:536px;width:75px;height:55px;z-index:23" viewBox="385 536 75 55">
  <defs><linearGradient id="ag" x1="0" y1="0" x2="0" y2="1"><stop offset="0" stop-color="#ffcb3d"/><stop offset=".6" stop-color="#fbc12f"/><stop offset="1" stop-color="#d9a31f"/></linearGradient></defs>
  <path d="M392 554.1 C400 552.6 410 552.6 419 554.2 C425 555.4 430.5 557.6 434.2 560.2 C434.6 557.5 433.4 554.5 433 551.9 C432.6 548.5 434.5 546 436.600 546.4 C438.2 546.8 439 548.3 439.6 549.8 C443.5 558.5 447 568.5 449.6 577.6 C450.3 579.8 448.8 580.6 447 580.1 C439.5 578.2 431.5 575.6 424.3 574.1 C422 573.6 421.6 571.6 423.6 570.6 L428 567.6 C420.5 562.6 408 559.4 392 560.6 Z" fill="url(#ag)" stroke="#e8b02a" stroke-width=".5"/>
</svg>


</body>
</html>
